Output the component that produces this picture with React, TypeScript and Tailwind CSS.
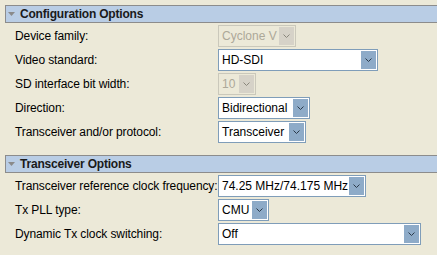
import { ReactNode } from 'react'

function Chevron({ disabled }: { disabled?: boolean }) {
  return (
    <svg width="7" height="4" viewBox="0 0 7 4" className="block">
      <path d="M0.5 0.5 L3.5 3.5 L6.5 0.5" fill="none" stroke={disabled ? '#8a877c' : '#2b3a4a'} strokeWidth="1" />
    </svg>
  )
}

function Select({ value, width, disabled }: { value: string; width: string; disabled?: boolean }) {
  return (
    <div
      className={`flex h-[22px] items-center border p-px ${width} ${
        disabled ? 'border-[#cac8bb] bg-[#ece9d8]' : 'border-[#7f9db9] bg-white'
      }`}
    >
      <span className={`flex-1 whitespace-nowrap pl-[2px] leading-none ${disabled ? 'text-[#aca899]' : 'text-black'}`}>
        {value}
      </span>
      <div
        className={`flex h-[18px] w-[15px] shrink-0 items-center justify-center ${
          disabled ? 'bg-[#d6d2c8]' : 'bg-[#8eabc8]'
        }`}
      >
        <Chevron disabled={disabled} />
      </div>
    </div>
  )
}

function Header({ title }: { title: string }) {
  return (
    <div className="flex h-[18px] items-center gap-[5px] border border-r-0 border-[#8c8c8c] bg-[#b9cde5] pl-[2px]">
      <svg width="7" height="4" viewBox="0 0 7 4" className="block">
        <path d="M0 0 H7 L3.5 4 Z" fill="#8a8a8a" />
      </svg>
      <span className="font-bold leading-none tracking-[-0.2px] text-[#1a1a1a]">{title}</span>
    </div>
  )
}

function Row({ label, children }: { label: string; children: ReactNode }) {
  return (
    <div className="grid grid-cols-[213px_auto]">
      <div className="flex h-[22px] items-center whitespace-nowrap pl-[10px] tracking-[-0.1px] text-black">{label}</div>
      <div>{children}</div>
    </div>
  )
}

export default function App() {
  return (
    <div
      className="h-[255px] w-[437px] overflow-hidden bg-[#ece9d8] pl-[5px] pt-[5px] text-[12px]"
      style={{ fontFamily: '"Liberation Sans", Arial, sans-serif' }}
    >
      <Header title="Configuration Options" />
      <div className="mt-[2px] flex flex-col gap-[2px]">
        <Row label="Device family:">
          <Select value="Cyclone V" width="w-[78px]" disabled />
        </Row>
        <Row label="Video standard:">
          <Select value="HD-SDI" width="w-[160px]" />
        </Row>
        <Row label="SD interface bit width:">
          <Select value="10" width="w-[38px]" disabled />
        </Row>
        <Row label="Direction:">
          <Select value="Bidirectional" width="w-[92px]" />
        </Row>
        <Row label="Transceiver and/or protocol:">
          <Select value="Transceiver" width="w-[88px]" />
        </Row>
      </div>

      <div className="mt-[12px]">
        <Header title="Transceiver Options" />
      </div>
      <div className="mt-[2px] flex flex-col gap-[2px]">
        <Row label="Transceiver reference clock frequency:">
          <Select value="74.25 MHz/74.175 MHz" width="w-[148px]" />
        </Row>
        <Row label="Tx PLL type:">
          <Select value="CMU" width="w-[51px]" />
        </Row>
        <Row label="Dynamic Tx clock switching:">
          <Select value="Off" width="w-[203px]" />
        </Row>
      </div>
    </div>
  )
}
